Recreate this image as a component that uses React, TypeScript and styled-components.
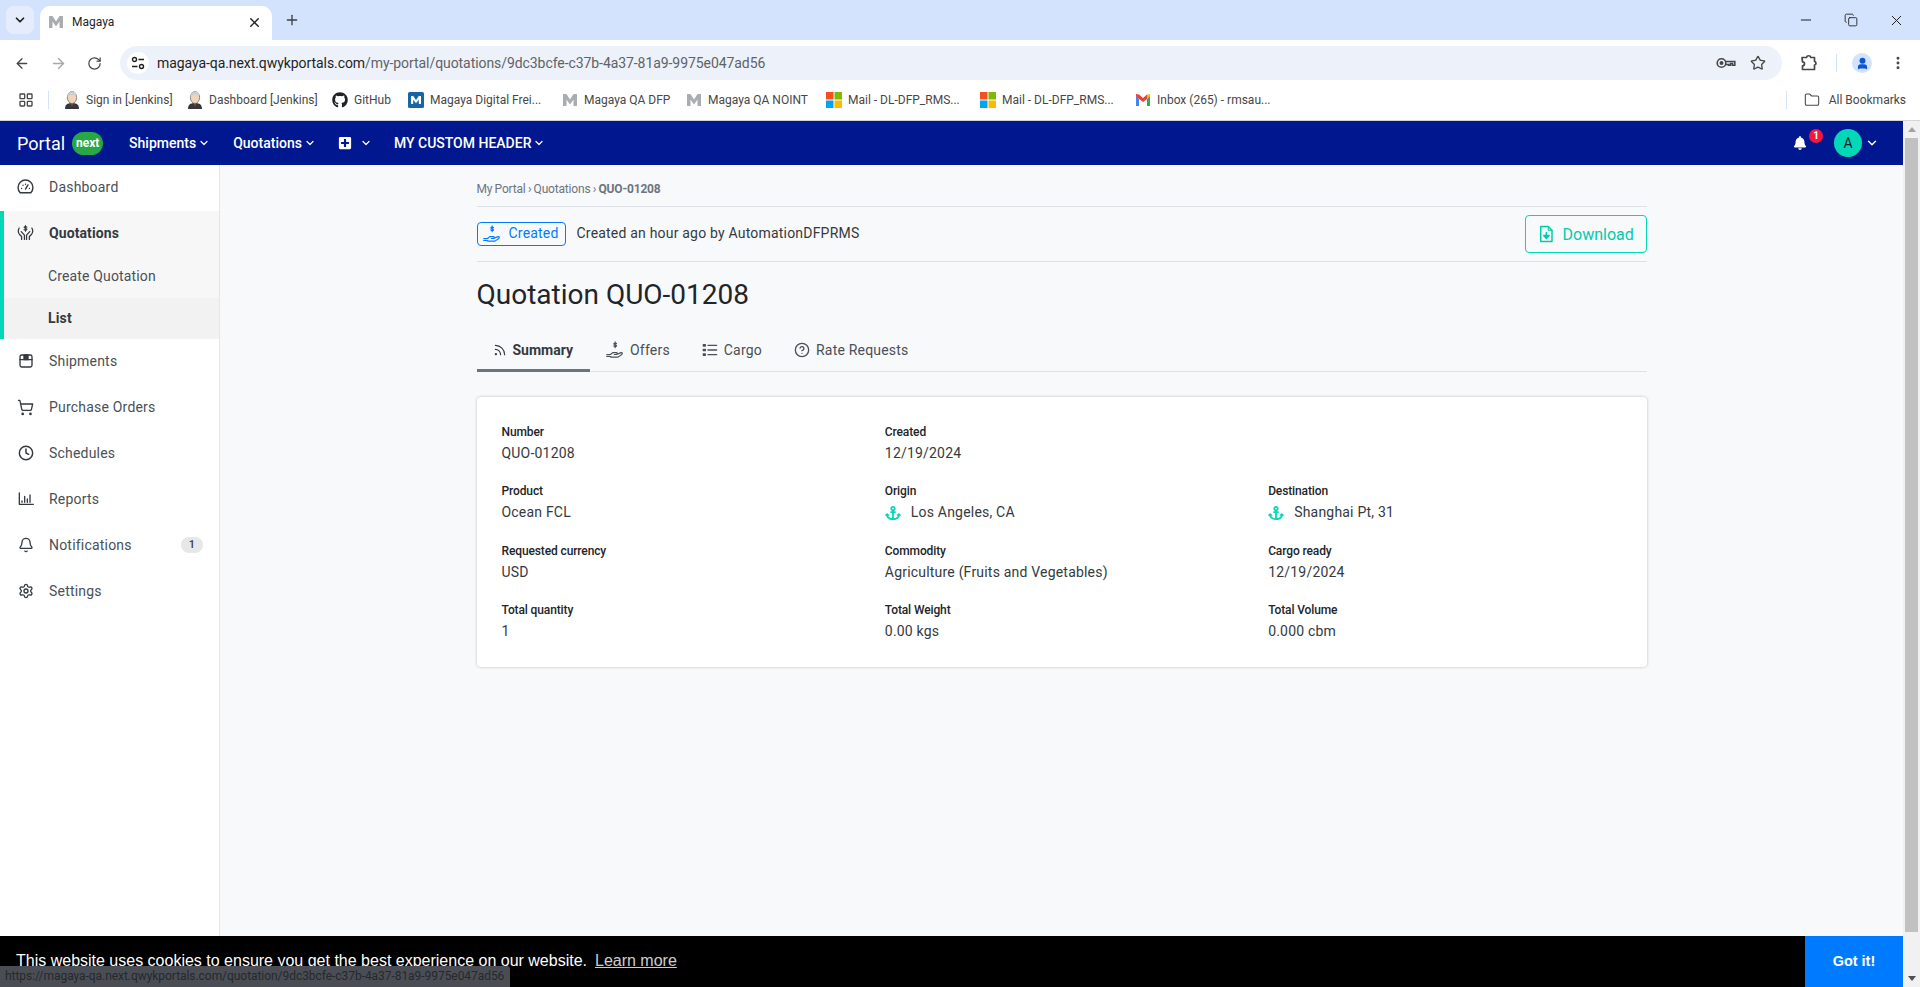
import React from 'react';
import styled, { createGlobalStyle } from 'styled-components';
import {
  ArrowLeft,
  ArrowRight,
  Bell,
  ChevronDown,
  CircleHelp,
  Clock,
  Copy,
  Folder,
  LayoutGrid,
  Minus,
  MoreVertical,
  Plus,
  RotateCw,
  Rss,
  Settings,
  ShoppingCart,
  Star,
  User,
  X,
} from 'lucide-react';
import { FaAnchor, FaBell, FaGithub, FaPlusSquare } from 'react-icons/fa';

const CHROME_FONT = 'Roboto, "Liberation Sans", sans-serif';
const TEAL = '#00d8b8';

const GlobalStyle = createGlobalStyle`
  html, body {
    margin: 0;
    padding: 0;
    height: 100%;
    overflow: hidden;
    background: #fff;
    font-family: Roboto, sans-serif;
  }
  #root {
    height: 100%;
  }
  * {
    box-sizing: border-box;
  }
`;

const Page = styled.div`
  display: flex;
  flex-direction: column;
  height: 100%;
`;

/* browser chrome */
const TabStrip = styled.div`
  display: flex;
  align-items: flex-end;
  height: 40px;
  background: #d3e3fd;
  padding-left: 6px;
`;

const TabSearch = styled.div`
  display: flex;
  align-items: center;
  justify-content: center;
  width: 28px;
  height: 28px;
  margin-bottom: 6px;
  border-radius: 8px;
  background: #e5edfc;
  color: #1f1f1f;
`;

const Tab = styled.div`
  display: flex;
  align-items: center;
  width: 232px;
  height: 34px;
  margin-left: 6px;
  padding: 0 10px 2px 8px;
  border-radius: 10px 10px 0 0;
  background: #fff;
  font: 12px ${CHROME_FONT};
  color: #1f1f1f;
`;

const TabTitle = styled.span`
  flex: 1;
  margin-left: 8px;
`;

const NewTab = styled.div`
  display: flex;
  margin: 0 0 12px 12px;
  color: #3c4043;
`;

const WindowControls = styled.div`
  display: flex;
  align-items: center;
  gap: 30px;
  margin-left: auto;
  height: 40px;
  padding-right: 15px;
  color: #1f1f1f;
`;

const Toolbar = styled.div`
  display: flex;
  align-items: center;
  height: 40px;
  padding: 6px 0 0 14px;
  background: #fff;
  color: #474747;
`;

const ToolButton = styled.div<{ $width: number; $faded?: boolean }>`
  display: flex;
  flex-shrink: 0;
  justify-content: center;
  width: ${(p) => p.$width}px;
  color: ${(p) => (p.$faded ? '#a6a8ab' : '#474747')};
`;

const Omnibox = styled.div`
  display: flex;
  flex-shrink: 0;
  align-items: center;
  width: 1662px;
  height: 34px;
  margin-left: 18px;
  padding: 0 16px 0 7px;
  border-radius: 17px;
  background: #edf2fa;
`;

const SiteInfo = styled.div`
  display: flex;
  align-items: center;
  justify-content: center;
  width: 22px;
  height: 22px;
  border-radius: 50%;
  background: #fff;
  color: #1f1f1f;
`;

const Url = styled.span`
  flex: 1;
  margin-left: 8px;
  font: 14px ${CHROME_FONT};
  letter-spacing: -0.07px;
  color: #5f6368;
`;

const UrlHost = styled.span`
  color: #1f1f1f;
`;

const OmniboxIcons = styled.div`
  display: flex;
  align-items: center;
  gap: 14px;
`;

const ToolSeparator = styled.div`
  flex-shrink: 0;
  width: 1px;
  height: 18px;
  margin-right: 15px;
  background: #d3e3fd;
`;

const ProfileButton = styled.div`
  display: flex;
  flex-shrink: 0;
  align-items: center;
  justify-content: center;
  width: 20px;
  height: 20px;
  margin-right: 8px;
  border-radius: 50%;
  background: #d3e3fd;
  color: #0b57d0;
`;

const BookmarksBar = styled.div`
  display: flex;
  align-items: center;
  height: 41px;
  padding: 0 14px 1px 18px;
  border-bottom: 1px solid #d5d5d5;
  background: #fff;
  font: 12px ${CHROME_FONT};
  color: #474747;
`;

const BarSeparator = styled.div<{ $right?: number }>`
  width: 1px;
  height: 18px;
  margin: 0 ${(p) => p.$right ?? 15}px 0 14px;
  background: #d3e3fd;
`;

const Bookmark = styled.div<{ $width: number }>`
  display: flex;
  align-items: center;
  gap: 6px;
  width: ${(p) => p.$width}px;
  white-space: nowrap;
  overflow: hidden;
`;

const AllBookmarks = styled.div`
  display: flex;
  align-items: center;
  gap: 9px;
  margin-left: auto;
`;

/* page */
const Body = styled.div`
  display: flex;
  flex: 1;
  min-height: 0;
`;

const Viewport = styled.div`
  display: flex;
  flex: 1;
  min-width: 0;
  flex-direction: column;
`;

const Scrollbar = styled.div`
  display: flex;
  flex-direction: column;
  align-items: center;
  width: 17px;
  padding: 6px 0;
  background: #f1f1f1;
`;

const ScrollArrow = styled.div<{ $down?: boolean }>`
  width: 0;
  height: 0;
  border-left: 4.5px solid transparent;
  border-right: 4.5px solid transparent;
  border-bottom: ${(p) => (p.$down ? '0' : '5px solid #a3a3a3')};
  border-top: ${(p) => (p.$down ? '5px solid #505050' : '0')};
`;

const ScrollThumb = styled.div`
  flex: 1;
  width: 13px;
  margin: 6px 0 44px;
  background: #c1c1c1;
`;

const TopNav = styled.div`
  display: flex;
  align-items: center;
  height: 44px;
  padding: 0 24px 0 17px;
  background: #00178f;
  color: #fff;
`;

const Brand = styled.div`
  font-size: 18px;
  margin-right: 7px;
`;

const NextBadge = styled.div`
  width: 31px;
  height: 23px;
  margin-right: 26px;
  border-radius: 12px;
  background: #28a745;
  font-size: 12px;
  font-weight: 700;
  line-height: 23px;
  text-align: center;
`;

const NavLink = styled.div<{ $gap?: number }>`
  display: flex;
  align-items: center;
  gap: 2px;
  margin-right: ${(p) => p.$gap ?? 23}px;
  font-size: 14px;
  font-weight: 500;
`;

const NavIconLink = styled.div`
  display: flex;
  align-items: center;
  gap: 8px;
  margin: 0 22px;
`;

const NavRight = styled.div`
  display: flex;
  align-items: center;
  margin-left: auto;
`;

const BellWrap = styled.div`
  position: relative;
  display: flex;
  margin-right: 27px;
`;

const BellBadge = styled.div`
  position: absolute;
  top: -7px;
  left: 16px;
  width: 14px;
  height: 14px;
  border-radius: 50%;
  background: #f5173c;
  font-size: 10px;
  font-weight: 700;
  line-height: 14px;
  text-align: center;
`;

const Avatar = styled.div`
  width: 28px;
  height: 28px;
  margin-right: 3px;
  border-radius: 50%;
  background: ${TEAL};
  color: #123;
  font-size: 14px;
  line-height: 28px;
  text-align: center;
`;

const Columns = styled.div`
  display: flex;
  flex: 1;
  min-height: 0;
`;

const Sidebar = styled.nav`
  width: 220px;
  border-right: 1px solid #e4e6ea;
  background: #fff;
`;

const SideItem = styled.div`
  display: flex;
  align-items: center;
  height: 46px;
  padding: 0 0 2px 17px;
  font-size: 14px;
  letter-spacing: 0.2px;
  color: #495057;
`;

const SideIcon = styled.span`
  display: flex;
  justify-content: center;
  width: 17px;
  margin-right: 15px;
  color: #343a40;
`;

const SideBadge = styled.span`
  width: 22px;
  height: 16px;
  margin: 0 16px 0 auto;
  border-radius: 8px;
  background: #e6e7e8;
  color: #343a40;
  font-size: 11px;
  font-weight: 500;
  line-height: 16px;
  text-align: center;
`;

const SideGroup = styled.div`
  border-left: 4px solid ${TEAL};
  background: #f7f7f7;
`;

const SideGroupTitle = styled(SideItem)`
  padding-left: 13px;
  font-weight: 700;
  letter-spacing: 0.1px;
  color: #343a40;
`;

const SideSubItem = styled.div<{ $active?: boolean }>`
  height: 41px;
  padding-left: 44px;
  background: ${(p) => (p.$active ? '#f2f2f2' : 'transparent')};
  font-size: 14px;
  font-weight: ${(p) => (p.$active ? 700 : 400)};
  letter-spacing: 0.15px;
  line-height: ${(p) => (p.$active ? 41 : 39)}px;
  color: ${(p) => (p.$active ? '#343a40' : '#495057')};
`;

const Main = styled.main`
  flex: 1;
  min-width: 0;
  background: #f8f9fb;
`;

const Content = styled.div`
  width: 1170px;
  margin: 0 auto;
`;

const Breadcrumb = styled.div`
  height: 42px;
  padding-top: 16px;
  border-bottom: 1px solid #dee2e6;
  font-size: 12px;
  letter-spacing: -0.18px;
  word-spacing: -0.5px;
  line-height: 16px;
  color: #6c757d;
`;

const Crumb = styled.strong`
  font-weight: 700;
`;

const StatusRow = styled.div`
  display: flex;
  align-items: center;
  height: 55px;
  border-bottom: 1px solid #dee2e6;
  font-size: 14px;
  letter-spacing: 0.2px;
  color: #343a40;
`;

const StatusText = styled.span`
  margin-bottom: 2px;
`;

const StatusBadge = styled.div`
  display: flex;
  align-items: center;
  gap: 8px;
  width: 89px;
  height: 24px;
  margin-right: 11px;
  padding-left: 5px;
  border: 1px solid #007bff;
  border-radius: 4px;
  color: #007bff;
`;

const DownloadButton = styled.div`
  display: flex;
  align-items: center;
  gap: 8px;
  width: 122px;
  height: 38px;
  margin-left: auto;
  padding-left: 11px;
  border: 1px solid ${TEAL};
  border-radius: 4px;
  color: #00cbad;
  font-size: 16px;
  letter-spacing: 0;
`;

const Title = styled.h1`
  margin: 16px 0 18px;
  font-size: 28px;
  font-weight: 400;
  line-height: 34px;
  color: #212529;
`;

const Tabs = styled.div`
  display: flex;
  height: 42px;
  border-bottom: 1px solid #dee2e6;
`;

const TabItem = styled.div<{ $active?: boolean }>`
  display: flex;
  align-items: center;
  gap: 6px;
  height: 42px;
  padding: 0 ${(p) => (p.$active ? 17 : 16)}px 0 16px;
  border-bottom: 3px solid ${(p) => (p.$active ? '#6c757d' : 'transparent')};
  font-size: 14px;
  font-weight: ${(p) => (p.$active ? 700 : 400)};
  letter-spacing: ${(p) => (p.$active ? 0 : 0.2)}px;
  color: ${(p) => (p.$active ? '#343a40' : '#495057')};
`;

const Card = styled.section`
  display: grid;
  grid-template-columns: repeat(3, 1fr);
  column-gap: 29px;
  row-gap: 18.3px;
  height: 270px;
  margin-top: 25px;
  padding: 26px 24px 0 25px;
  border-radius: 4px;
  background: #fff;
  box-shadow: 0 0 3px rgba(0, 0, 0, 0.25);
  align-content: start;
`;

const Field = styled.div``;

const FieldLabel = styled.div`
  margin-bottom: 2px;
  font-size: 12px;
  font-weight: 500;
  letter-spacing: -0.12px;
  line-height: 18px;
  color: #212529;
`;

const FieldValue = styled.div`
  display: flex;
  align-items: center;
  gap: 10px;
  font-size: 14px;
  letter-spacing: 0.2px;
  line-height: 21px;
  color: #343a40;
`;

const PortIcon = styled.span`
  display: flex;
  color: ${TEAL};
`;

/* overlays */
const CookieBar = styled.div`
  position: fixed;
  left: 0;
  right: 17px;
  bottom: 0;
  display: flex;
  align-items: center;
  height: 51px;
  padding-left: 16px;
  background: #000;
  color: #fff;
  font: 16px/24px 'Liberation Sans', Arial, sans-serif;
`;

const CookieText = styled.span`
  margin-bottom: 2px;
`;

const CookieLink = styled.span`
  margin-left: 8px;
  opacity: 0.8;
  text-decoration: underline;
`;

const GotIt = styled.div`
  width: 98px;
  height: 51px;
  margin-left: auto;
  background: #007bff;
  font-size: 14.4px;
  font-weight: 700;
  line-height: 51px;
  text-align: center;
`;

const StatusBubble = styled.div`
  position: fixed;
  left: 0;
  bottom: 0;
  width: 510px;
  height: 21px;
  padding-left: 5px;
  border-top-right-radius: 3px;
  background: #4a4e54;
  color: #25282c;
  font: 12px/21px ${CHROME_FONT};
  letter-spacing: -0.05px;
  white-space: nowrap;
`;

/* drawn icons */
type IconProps = { size?: number };

const Svg: React.FC<React.PropsWithChildren<IconProps>> = ({ size = 16, children }) => (
  <svg
    width={size}
    height={size}
    viewBox="0 0 24 24"
    fill="none"
    stroke="currentColor"
    strokeWidth="2"
    strokeLinecap="round"
    strokeLinejoin="round"
  >
    {children}
  </svg>
);

const DialIcon: React.FC<IconProps> = ({ size }) => (
  <Svg size={size}>
    <path d="M4.500 20a10.500 10.500 0 1 1 15 0z" />
    <path d="M12 15l3.500-6M6.500 14h.01M8.500 9.500h.01M12 8h.01M17.500 14h.01" />
  </Svg>
);

const HandsIcon: React.FC<IconProps> = ({ size }) => (
  <Svg size={size}>
    <path d="M3 5c-2 4-1.500 7 1 9.500l2.500 2.500v4M21 5c2 4 1.500 7-1 9.500L17.500 17v4M6 10l4.500 5v6M18 10l-4.500 5v6" strokeWidth="1.800" />
    <path d="M14 3.800c-.5-1-3.500-1.300-4 0 0 2.200 4 1 4 3.200-.5 1.300-3.500 1-4 0M12 1.500v8" strokeWidth="1.500" />
  </Svg>
);

const HandCoinIcon: React.FC<IconProps> = ({ size }) => (
  <Svg size={size}>
    <path d="M14 3.500c-.5-1-3-1-3.500 0 0 2 3.500 1 3.500 3-.5 1-3 1-3.500 0M12.200 1v8" strokeWidth="1.500" />
    <path d="M1 18h5l3-2.500h5c1.500 0 1.500 2.500 0 2.500h-3m3 0l6-2.500c1.500-.5 2.500 1 1 2.500l-5 3.500H7l-2-1H1" strokeWidth="1.600" />
  </Svg>
);

const BoxIcon: React.FC<IconProps> = ({ size }) => (
  <Svg size={size}>
    <rect x="3" y="3" width="18" height="18" rx="2.500" />
    <path d="M3 10h18" />
    <path d="M9 3h6v7H9z" fill="currentColor" />
  </Svg>
);

const BarsIcon: React.FC<IconProps> = ({ size }) => (
  <Svg size={size}>
    <path d="M2 3v17h21M6 15v2M10 8v9M14 12v5M18 6v11" />
  </Svg>
);

const ListIcon: React.FC<IconProps> = ({ size }) => (
  <Svg size={size}>
    <path d="M9 5h13M9 12h13M9 19h13" />
    <path d="M2 4h3v2H2zM2 11h3v2H2zM2 18h3v2H2z" fill="currentColor" />
  </Svg>
);

const FileDownIcon: React.FC<IconProps> = ({ size }) => (
  <Svg size={size}>
    <path d="M5 2h10l5 5v15H5z" />
    <path d="M15 2v5h5" strokeWidth="1.500" />
    <path d="M12.500 10v6" />
    <path d="M9 14h7l-3.500 4z" fill="currentColor" />
  </Svg>
);

const SiteInfoIcon: React.FC = () => (
  <svg width="14" height="14" viewBox="0 0 14 14" fill="none" stroke="currentColor" strokeWidth="1.400">
    <circle cx="3.500" cy="3.500" r="2" />
    <path d="M7.500 3.500H13M1 10.500h5.500" />
    <circle cx="10.500" cy="10.500" r="2" />
  </svg>
);

const ExtensionIcon: React.FC = () => (
  <svg width="18" height="18" viewBox="0 0 18 18" fill="none" stroke="currentColor" strokeWidth="1.700" strokeLinejoin="round">
    <path d="M2 3.500h4.500a2.200 2.200 0 0 1 4.300 0H14.500v3.800a1.900 1.900 0 0 1 0 3.700V15.500H2.500v-3.700a2 2 0 0 0 0-4z" />
  </svg>
);

const KeyIcon: React.FC = () => (
  <svg width="20" height="16" viewBox="0 0 20 16" fill="none" stroke="#474747" strokeWidth="1.600">
    <circle cx="5.500" cy="8" r="4.300" />
    <circle cx="5.500" cy="8" r="1.200" fill="#474747" />
    <path d="M9.800 6.500h9v3.700h-2.300v-1.700h-2v1.700h-2V9.500H9.800" />
  </svg>
);

const MagayaMark: React.FC<{ color?: string; size?: number }> = ({ color = '#a9adb1', size = 16 }) => (
  <svg width={size} height={size} viewBox="0 0 16 16">
    <path d="M1 14V2h3.500L8 7.500 11.500 2H15v12h-3.500V7.500L8 12.500 4.500 7.500V14z" fill={color} />
  </svg>
);

const MagayaTile: React.FC = () => (
  <svg width="16" height="16" viewBox="0 0 16 16">
    <rect width="16" height="16" rx="1.500" fill="#1565a8" />
    <path d="M3 12V4h2.200L8 8l2.800-4H13v8h-2.200V7.800L8 11.300 5.200 7.800V12z" fill="#fff" />
  </svg>
);

const JenkinsMark: React.FC = () => (
  <svg width="16" height="18" viewBox="0 0 16 18">
    <path d="M1 18c0-4 2-6 7-6s7 2 7 6z" fill="#33383d" />
    <path d="M7 12h2l-1 4z" fill="#d33833" />
    <ellipse cx="8" cy="6.500" rx="4.600" ry="6" fill="#f0d6b7" stroke="#6d6b6d" strokeWidth="0.800" />
    <path d="M3.500 6C3.500 2 6 .5 8.500.5 11 .5 12.500 2 12.500 4 10 4 6 3.500 3.500 6z" fill="#d0cfcf" />
  </svg>
);

const MicrosoftMark: React.FC = () => (
  <svg width="16" height="16" viewBox="0 0 16 16">
    <rect width="7.500" height="7.500" fill="#f25022" />
    <rect x="8.500" width="7.500" height="7.500" fill="#7fba00" />
    <rect y="8.500" width="7.500" height="7.500" fill="#00a4ef" />
    <rect x="8.500" y="8.500" width="7.500" height="7.500" fill="#ffb900" />
  </svg>
);

const GmailMark: React.FC = () => (
  <svg width="16" height="16" viewBox="0 0 16 16">
    <path d="M1 3.500V14h3V7z" fill="#4285f4" />
    <path d="M15 3.500V14h-3V7z" fill="#34a853" />
    <path d="M12 2.500L15 2v2l-3 3z" fill="#fbbc04" />
    <path d="M1 2l3 .5L8 6l4-3.500V7L8 10 4 7 1 4z" fill="#ea4335" />
  </svg>
);

const SIDE_ITEMS_BOTTOM = [
  { title: 'Shipments', icon: <BoxIcon /> },
  { title: 'Purchase Orders', icon: <ShoppingCart size={17} strokeWidth={1.8} /> },
  { title: 'Schedules', icon: <Clock size={16} strokeWidth={2.2} /> },
  { title: 'Reports', icon: <BarsIcon /> },
  { title: 'Notifications', icon: <Bell size={16} strokeWidth={2} />, badge: '1' },
  { title: 'Settings', icon: <Settings size={16} strokeWidth={2} /> },
];

const FIELDS = [
  { label: 'Number', value: 'QUO-01208' },
  { label: 'Created', value: '12/19/2024' },
  { label: '', value: '' },
  { label: 'Product', value: 'Ocean FCL' },
  { label: 'Origin', value: 'Los Angeles, CA', port: true },
  { label: 'Destination', value: 'Shanghai Pt, 31', port: true },
  { label: 'Requested currency', value: 'USD' },
  { label: 'Commodity', value: 'Agriculture (Fruits and Vegetables)' },
  { label: 'Cargo ready', value: '12/19/2024' },
  { label: 'Total quantity', value: '1' },
  { label: 'Total Weight', value: '0.00 kgs' },
  { label: 'Total Volume', value: '0.000 cbm' },
];

const App: React.FC = () => {
  return (
    <Page>
      <GlobalStyle />
      <TabStrip>
        <TabSearch>
          <ChevronDown size={14} strokeWidth={3} />
        </TabSearch>
        <Tab>
          <MagayaMark />
          <TabTitle>Magaya</TabTitle>
          <X size={15} strokeWidth={2.2} />
        </Tab>
        <NewTab>
          <Plus size={16} strokeWidth={2} />
        </NewTab>
        <WindowControls>
          <Minus size={16} strokeWidth={1.5} />
          <Copy size={14} strokeWidth={1.5} />
          <X size={17} strokeWidth={1.4} />
        </WindowControls>
      </TabStrip>

      <Toolbar>
        <ToolButton $width={16}>
          <ArrowLeft size={17} strokeWidth={2} />
        </ToolButton>
        <ToolButton $width={56} $faded>
          <ArrowRight size={17} strokeWidth={2} />
        </ToolButton>
        <ToolButton $width={16}>
          <RotateCw size={15} strokeWidth={2} />
        </ToolButton>
        <Omnibox>
          <SiteInfo>
            <SiteInfoIcon />
          </SiteInfo>
          <Url>
            <UrlHost>magaya-qa.next.qwykportals.com</UrlHost>
            /my-portal/quotations/9dc3bcfe-c37b-4a37-81a9-9975e047ad56
          </Url>
          <OmniboxIcons>
            <KeyIcon />
            <Star size={16} strokeWidth={2} />
          </OmniboxIcons>
        </Omnibox>
        <ToolButton $width={54}>
          <ExtensionIcon />
        </ToolButton>
        <ToolSeparator />
        <ProfileButton>
          <User size={13} strokeWidth={3} fill="currentColor" />
        </ProfileButton>
        <ToolButton $width={36}>
          <MoreVertical size={16} strokeWidth={2.4} />
        </ToolButton>
      </Toolbar>

      <BookmarksBar>
        <LayoutGrid size={16} strokeWidth={2} />
        <BarSeparator />
        <Bookmark $width={123}>
          <JenkinsMark />
          Sign in [Jenkins]
        </Bookmark>
        <Bookmark $width={145}>
          <JenkinsMark />
          Dashboard [Jenkins]
        </Bookmark>
        <Bookmark $width={76}>
          <FaGithub size={16} color="#1f2328" />
          GitHub
        </Bookmark>
        <Bookmark $width={154}>
          <MagayaTile />
          Magaya Digital Frei...
        </Bookmark>
        <Bookmark $width={124}>
          <MagayaMark />
          Magaya QA DFP
        </Bookmark>
        <Bookmark $width={140}>
          <MagayaMark />
          Magaya QA NOINT
        </Bookmark>
        <Bookmark $width={154}>
          <MicrosoftMark />
          Mail - DL-DFP_RMS...
        </Bookmark>
        <Bookmark $width={155}>
          <MicrosoftMark />
          Mail - DL-DFP_RMS...
        </Bookmark>
        <Bookmark $width={140}>
          <GmailMark />
          Inbox (265) - rmsau...
        </Bookmark>
        <AllBookmarks>
          <BarSeparator $right={8} />
          <Folder size={16} strokeWidth={1.6} />
          All Bookmarks
        </AllBookmarks>
      </BookmarksBar>

      <Body>
        <Viewport>
          <TopNav>
            <Brand>Portal</Brand>
            <NextBadge>next</NextBadge>
            <NavLink>
              Shipments <ChevronDown size={12} strokeWidth={2.4} />
            </NavLink>
            <NavLink $gap={0}>
              Quotations <ChevronDown size={12} strokeWidth={2.4} />
            </NavLink>
            <NavIconLink>
              <FaPlusSquare size={14} />
              <ChevronDown size={12} strokeWidth={2.4} />
            </NavIconLink>
            <NavLink>
              MY CUSTOM HEADER <ChevronDown size={12} strokeWidth={2.4} />
            </NavLink>
            <NavRight>
              <BellWrap>
                <FaBell size={14} />
                <BellBadge>1</BellBadge>
              </BellWrap>
              <Avatar>A</Avatar>
              <ChevronDown size={14} strokeWidth={2.4} />
            </NavRight>
          </TopNav>
          <Columns>
            <Sidebar>
              <SideItem>
                <SideIcon>
                  <DialIcon size={18} />
                </SideIcon>
                Dashboard
              </SideItem>
              <SideGroup>
                <SideGroupTitle>
                  <SideIcon>
                    <HandsIcon size={18} />
                  </SideIcon>
                  Quotations
                </SideGroupTitle>
                <SideSubItem>Create Quotation</SideSubItem>
                <SideSubItem $active>List</SideSubItem>
              </SideGroup>
              {SIDE_ITEMS_BOTTOM.map((item) => (
                <SideItem key={item.title}>
                  <SideIcon>{item.icon}</SideIcon>
                  {item.title}
                  {item.badge && <SideBadge>{item.badge}</SideBadge>}
                </SideItem>
              ))}
            </Sidebar>
            <Main>
              <Content>
                <Breadcrumb>
                  My Portal › Quotations › <Crumb>QUO-01208</Crumb>
                </Breadcrumb>
                <StatusRow>
                  <StatusBadge>
                    <HandCoinIcon size={18} />
                    <StatusText>Created</StatusText>
                  </StatusBadge>
                  <StatusText>Created an hour ago by AutomationDFPRMS</StatusText>
                  <DownloadButton>
                    <FileDownIcon size={18} />
                    Download
                  </DownloadButton>
                </StatusRow>
                <Title>Quotation QUO-01208</Title>
                <Tabs>
                  <TabItem $active>
                    <Rss size={14} strokeWidth={2} />
                    Summary
                  </TabItem>
                  <TabItem>
                    <HandCoinIcon size={18} />
                    Offers
                  </TabItem>
                  <TabItem>
                    <ListIcon size={16} />
                    Cargo
                  </TabItem>
                  <TabItem>
                    <CircleHelp size={16} strokeWidth={2} />
                    Rate Requests
                  </TabItem>
                </Tabs>
                <Card>
                  {FIELDS.map((field, index) => (
                    <Field key={index}>
                      {field.label && <FieldLabel>{field.label}</FieldLabel>}
                      <FieldValue>
                        {field.port && (
                          <PortIcon>
                            <FaAnchor size={16} />
                          </PortIcon>
                        )}
                        {field.value}
                      </FieldValue>
                    </Field>
                  ))}
                </Card>
              </Content>
            </Main>
          </Columns>
        </Viewport>
        <Scrollbar>
          <ScrollArrow />
          <ScrollThumb />
          <ScrollArrow $down />
        </Scrollbar>
      </Body>

      <CookieBar>
        <CookieText>
          This website uses cookies to ensure you get the best experience on our website.
          <CookieLink>Learn more</CookieLink>
        </CookieText>
        <GotIt>Got it!</GotIt>
      </CookieBar>
      <StatusBubble>https://magaya-qa.next.qwykportals.com/quotation/9dc3bcfe-c37b-4a37-81a9-9975e047ad56</StatusBubble>
    </Page>
  );
};

export default App;
